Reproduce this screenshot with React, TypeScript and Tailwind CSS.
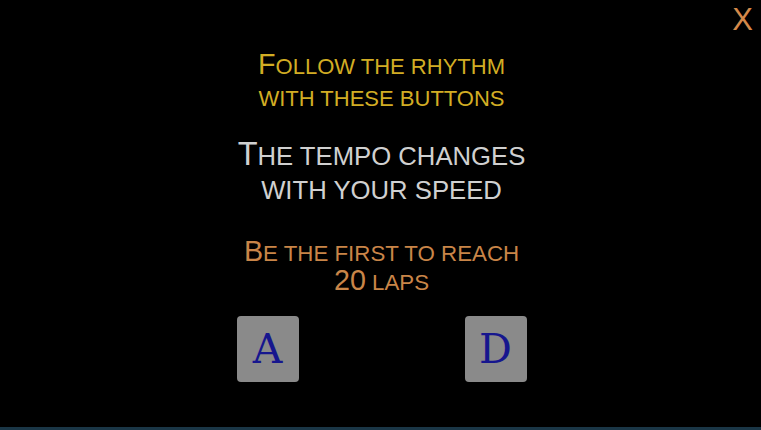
import React from 'react';

// fake small caps: lowercase letters drawn as smaller capitals
const SmallCaps: React.FC<{ text: string; small: string }> = ({ text, small }) => {
    const runs = text.match(/[a-z ]+|[^a-z ]+/g) ?? [];
    return (
        <>
            {runs.map((run, i) =>
                /[a-z ]/.test(run[0]) ? (
                    <span key={i} className={`uppercase leading-[0] ${small}`}>{run}</span>
                ) : (
                    <span key={i}>{run}</span>
                )
            )}
        </>
    );
};

const Key: React.FC<{ label: string }> = ({ label }) => (
    <div className="w-[62px] h-[66px] rounded-[4px] bg-[#8a8a8a] flex items-center justify-center">
        <span className="text-[#16168e] text-[41px] leading-none font-['DejaVu_Serif',serif]">
            {label}
        </span>
    </div>
);

export default function App() {
    return (
        <div className="w-[761px] h-[430px] bg-black flex flex-col font-['Liberation_Sans',Arial,sans-serif] relative overflow-hidden">
            <button className="absolute right-[8px] top-[0px] text-[#d4894a] text-[31px] leading-none pt-[4px]">
                X
            </button>
            <div className="flex-1 flex flex-col items-center pl-[2px] pt-[48px]">
                <p className="text-[#d2ad24] text-[28.7px] leading-[32px] text-center">
                    <SmallCaps text="Follow the rhythm" small="text-[22px]" />
                    <br />
                    <SmallCaps text="with these buttons" small="text-[22px]" />
                </p>
                <p className="text-[#d0d0d0] text-[32.5px] leading-[34px] text-center mt-[25px]">
                    <SmallCaps text="The tempo changes" small="text-[25.7px]" />
                    <br />
                    <SmallCaps text="with your speed" small="text-[25.7px]" />
                </p>
                <p className="text-[#c98548] text-[28.7px] leading-[29px] text-center mt-[32px]">
                    <SmallCaps text="Be the first to reach" small="text-[22.3px]" />
                    <br />
                    <SmallCaps text="20 laps" small="text-[22.3px]" />
                </p>
                <div className="flex gap-[166px] mt-[21px]">
                    <Key label="A" />
                    <Key label="D" />
                </div>
            </div>
            <div className="h-[3px] bg-[#1a3646]" />
        </div>
    );
}
